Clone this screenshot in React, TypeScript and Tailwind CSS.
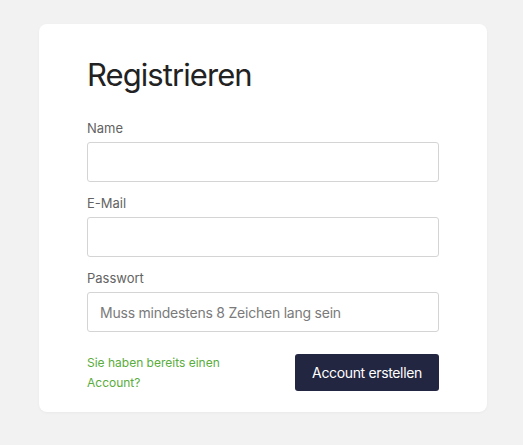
import React from "react";

const font = { fontFamily: "Inter, 'Noto Sans', sans-serif" };

function Field({ label, placeholder, type = "text", last = false }: { label: string; placeholder?: string; type?: string; last?: boolean }) {
  return (
    <div className={last ? "" : "mb-[11px]"}>
      <label className="block text-[13px] leading-[20px] text-[#636363] mb-1">{label}</label>
      <input
        type={type}
        placeholder={placeholder}
        className="block w-full h-[40px] rounded-[3px] border border-[#d4d4d4] bg-white px-3 text-[14px] tracking-[-0.016em] text-[#333] placeholder:text-[#7a7a7a] outline-none"
      />
    </div>
  );
}

export default function App() {
  return (
    <div className="min-h-[445px] bg-[#f2f2f2] pt-6 pl-[39px]" style={font}>
      <div className="w-[448px] rounded-[8px] bg-white shadow-[0_1px_3px_rgba(0,0,0,0.04)] px-12 pt-[32px] pb-[19px]">
        <h1 className="text-[31px] leading-[38px] tracking-[-0.03em] font-normal text-[#222] mb-[24px]">Registrieren</h1>
        <Field label="Name" />
        <Field label="E-Mail" type="email" />
        <Field label="Passwort" type="password" placeholder="Muss mindestens 8 Zeichen lang sein" last />
        <div className="mt-[21px] flex items-start justify-between">
          <a href="#" className="block w-[150px] text-[12px] leading-[20px] text-[#5aac3c]">
            Sie haben bereits einen Account?
          </a>
          <button className="mt-[1px] h-[37px] w-[144px] rounded-[3px] bg-[#222640] text-[14px] tracking-[-0.025em] text-white">
            Account erstellen
          </button>
        </div>
      </div>
    </div>
  );
}
